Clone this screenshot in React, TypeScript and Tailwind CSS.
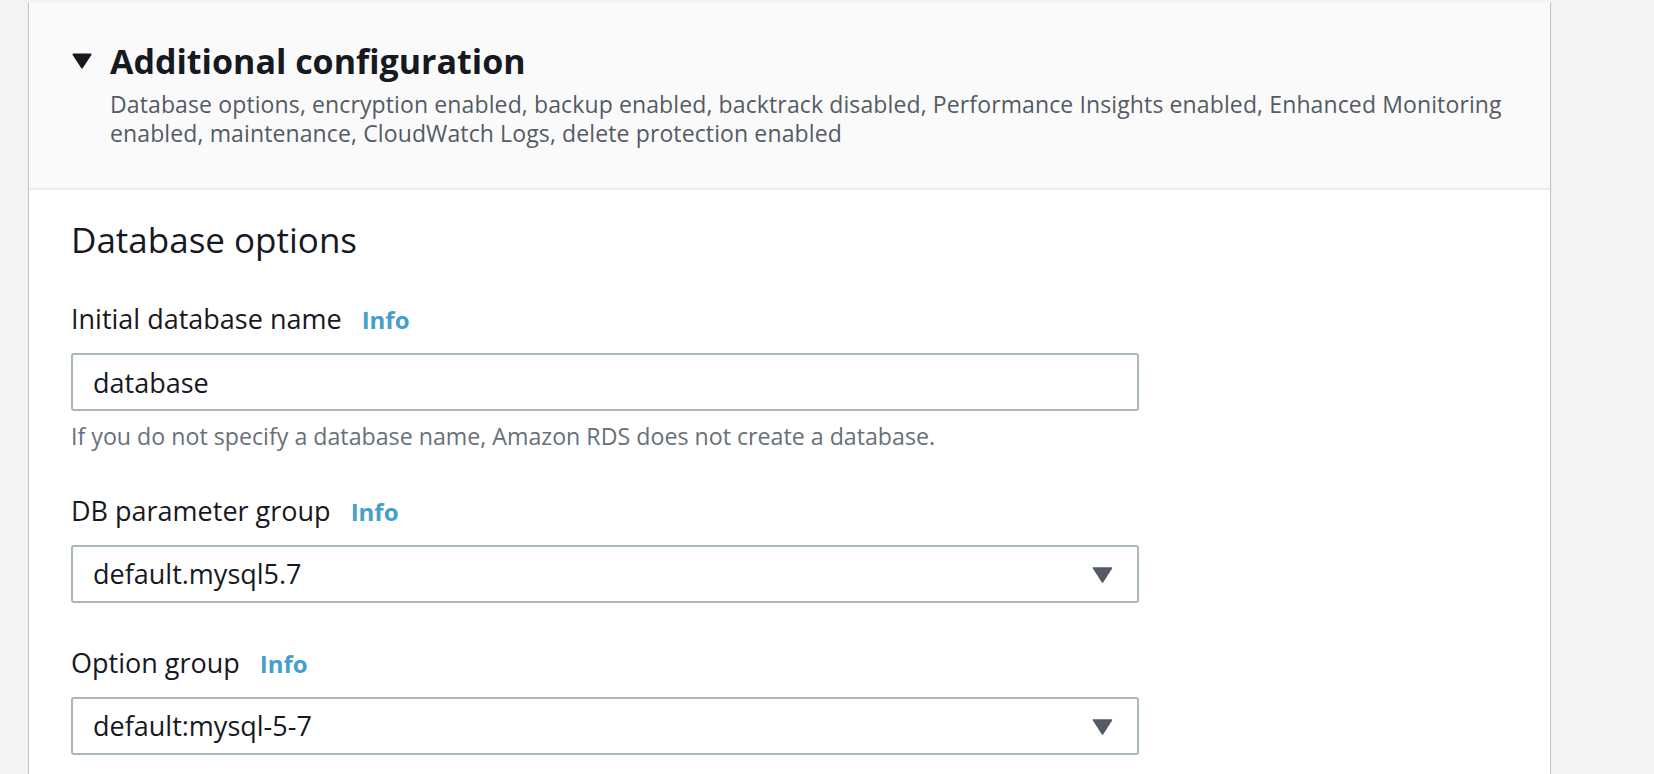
import React from "react";

const font = { fontFamily: '"Open Sans", "Noto Sans", sans-serif' };

function Info() {
  return <span className="ml-[20px] text-[24px] font-bold text-[#44a0c8]">Info</span>;
}

function Caret() {
  return (
    <svg width="21" height="16" viewBox="0 0 21 16" className="absolute right-[24px] top-[20px]">
      <path d="M1.5 1 H19.5 L10.5 15 Z" fill="#545b64" stroke="#545b64" strokeWidth="1.5" strokeLinejoin="round" />
    </svg>
  );
}

export default function App() {
  return (
    <div className="min-h-[774px] w-full bg-[#f2f3f3] pt-[2px] text-[#16191f]" style={font}>
      <div className="ml-[29px] w-[1521px] bg-white shadow-[0_1px_1px_0_rgba(0,28,36,0.3),1px_1px_1px_0_rgba(0,28,36,0.15),-1px_1px_1px_0_rgba(0,28,36,0.15)]">
        <div className="border-b-2 border-[#eaeded] bg-[#fafafa] pb-[40px] pl-[43px] pt-[39px]">
          <div className="flex items-center">
            <svg width="20" height="16" viewBox="0 0 20 16" className="mr-[18px]">
              <path d="M1.5 1.5 H18.5 L10 14.5 Z" fill="#16191f" stroke="#16191f" strokeWidth="2" strokeLinejoin="round" />
            </svg>
            <h1 className="text-[34px] font-bold leading-[40px]">Additional configuration</h1>
          </div>
          <p className="ml-[38px] mt-[9px] max-w-[1420px] text-[23px] leading-[29px] tracking-[0.12px] text-[#545b64]">
            Database options, encryption enabled, backup enabled, backtrack disabled, Performance Insights enabled, Enhanced Monitoring enabled, maintenance, CloudWatch Logs, delete protection enabled
          </p>
        </div>
        <div className="pl-[42px] pt-[28px] pb-[40px]">
          <h2 className="text-[35px] font-normal leading-[44px]">Database options</h2>

          <div className="mt-[40px] text-[27px] leading-[34px]">
            Initial database name
            <Info />
          </div>
          <div className="mt-[16px] h-[58px] w-[1068px] rounded-[3px] border-2 border-[#aab7b8] pl-[20px] pt-[11px] text-[27px] leading-[34px]">
            database
          </div>
          <p className="mt-[10px] text-[23.2px] leading-[30px] text-[#687078]">
            If you do not specify a database name, Amazon RDS does not create a database.
          </p>

          <div className="mt-[43px] text-[27px] leading-[34px]">
            DB parameter group
            <Info />
          </div>
          <div className="relative mt-[16px] h-[58px] w-[1068px] rounded-[3px] border-2 border-[#aab7b8] pl-[20px] pt-[10px] text-[27px] leading-[34px]">
            default.mysql5.7
            <Caret />
          </div>

          <div className="mt-[43px] text-[27px] leading-[34px]">
            Option group
            <Info />
          </div>
          <div className="relative mt-[16px] h-[58px] w-[1068px] rounded-[3px] border-2 border-[#aab7b8] pl-[20px] pt-[10px] text-[27px] leading-[34px]">
            default:mysql-5-7
            <Caret />
          </div>
        </div>
      </div>
    </div>
  );
}
